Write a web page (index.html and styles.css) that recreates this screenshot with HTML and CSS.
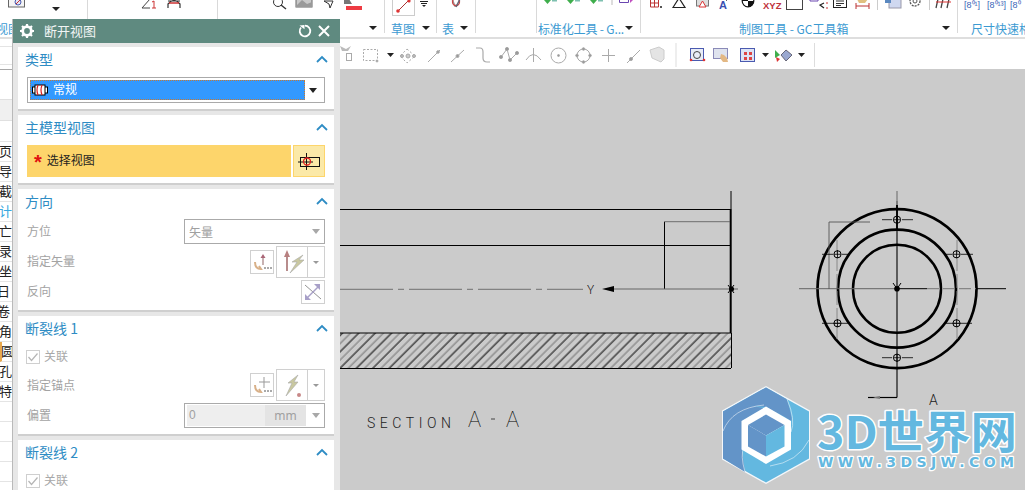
FILE: index.html
```html
<!DOCTYPE html>
<html lang="zh">
<head>
<meta charset="utf-8">
<title>断开视图</title>
<link rel="stylesheet" href="styles.css">
</head>
<body>
<div class="app">
  <header class="ribbon">
    <section class="group g0">
      <svg class="strip" viewBox="0 0 87 24" width="87" height="24">
        <rect x="8.500" y="-4" width="16" height="11" fill="#f4f4f4" stroke="#666"/><circle cx="18" cy="2" r="3" fill="#dfe6f6" stroke="#4a5ab0"/><path d="M16 4l4-4" stroke="#c33"/>
        <path d="M52 7h8l-4 4z" fill="#222"/>
      </svg>
      <div class="label lab-view">视图</div>
    </section>
    <section class="group g1">
      <svg class="strip" viewBox="88 0 129 24" width="129" height="24">
        <path d="M150 -1L142 8H150" fill="none" stroke="#444"/><path d="M152 8h4M154 8V1l-2 1" fill="none" stroke="#c33"/>
        <path d="M168 8V4Q174 -3 180 4V8M168 1h12" fill="none" stroke="#333" stroke-width="1.200"/><path d="M169 3h10" stroke="#c33" stroke-width="1.500"/>
      </svg>
    </section>
    <section class="group g2">
      <svg class="strip" viewBox="218 0 166 24" width="166" height="24">
        <circle cx="278" cy="2" r="4.500" fill="none" stroke="#333"/><path d="M281 5l5 4" stroke="#333" stroke-width="1.400"/>
        <rect x="296" y="-4" width="16" height="11" fill="#c9c9c9" stroke="#666"/><path d="M296 6l6-6 5 4 5-2v5h-16z" fill="#9a9a9a"/>
        <path d="M324 1h9l-3 7-1-4z" fill="none" stroke="#333"/>
        <path d="M344 -1h5l3 5h-8z" fill="#777"/><rect x="346" y="6" width="16" height="4" fill="#ee3b43"/>
      </svg>
      <i class="caret caret-a"></i>
    </section>
    <section class="group g3">
      <svg class="strip" viewBox="385 0 51 24" width="51" height="24">
        <rect x="392.500" y="-3" width="22" height="18.500" fill="#fff" stroke="#ccc"/>
        <path d="M398 11L409 0" stroke="#a33" stroke-width="1"/><circle cx="398" cy="11" r="1.800" fill="#d33"/><circle cx="409" cy="1" r="1.600" fill="#d33"/>
        <path d="M420 1.500h8M421 3.500h6" stroke="#222"/><path d="M422 5h4l-2 2z" fill="#222"/>
      </svg>
      <div class="label lab-sketch">草图</div>
      <i class="caret caret-b"></i>
    </section>
    <section class="group g4">
      <svg class="strip" viewBox="437 0 38 24" width="38" height="24">
        <path d="M452 -1l3 7 3-1" fill="none" stroke="#999" stroke-width="1.500"/><circle cx="456" cy="2" r="3.500" fill="none" stroke="#c44" stroke-width="1.300"/><path d="M460 -1l-4 8" stroke="#667" stroke-width="1.500"/>
      </svg>
      <div class="label lab-table">表</div>
      <i class="caret caret-c"></i>
    </section>
    <section class="group g5"></section>
    <section class="group g6">
      <svg class="strip" viewBox="537 0 103 24" width="103" height="24">
        <path d="M544 0h7l-3.500 4zM567 0h7l-3.500 4zM590 0h7l-3.500 4z" fill="#3fae4c"/>
        <path d="M552 0h5v1.500h-5zM575 0h5v1.500h-5zM598 0h5v1.500h-5z" fill="#7ec0b0"/>
        <path d="M612 -1v6" stroke="#bbb"/>
        <path d="M619.500 -1v3.500h9V-1" fill="none" stroke="#6a46b0"/><path d="M630 0h3l-3 3z" fill="#c050c0"/>
      </svg>
      <div class="label lab-std">标准化工具 - G...</div>
      <i class="caret caret-d"></i>
    </section>
    <section class="group g7">
      <svg class="strip" viewBox="641 0 316 24" width="316" height="24">
        <path d="M650.500 -1v8h8M650.500 3h8M654.500 -1v8M658.500 -1v8" fill="none" stroke="#b33"/><path d="M660 6l2 2m0-2l-2 2" stroke="#555"/>
        <path d="M673 7.500L679 -2l6 9.500z" fill="none" stroke="#222" stroke-width="1.200"/>
        <rect x="696.500" y="-3" width="12" height="9" fill="#ddd" stroke="#777"/><path d="M702.500 1l3.500 6h-7z" fill="#fff" stroke="#d33"/>
        <text class="ic-a" x="719" y="9">A</text><path d="M726 1l3-3" stroke="#666"/>
        <circle cx="748" cy="1" r="5.800" fill="#fff" stroke="#111" stroke-width="1.200"/><path d="M748 1v6a6 6 0 0 0 6-6zM748 1v-6a6 6 0 0 0-6 6z" fill="#111"/>
        <text class="ic-xyz" x="763" y="9">XYZ</text>
        <rect x="786.500" y="-2" width="16" height="11.500" fill="#fff" stroke="#444"/>
        <path d="M810 -1h8v2h-8z" fill="#fff" stroke="#6a46b0"/><path d="M824 3l-4 2 4 3" fill="none" stroke="#222" stroke-width="1.200"/><path d="M826 3h2M826 8h2" stroke="#c33"/>
        <rect x="833.500" y="-2" width="13" height="9.500" fill="#fff" stroke="#222"/><path d="M836 1h8M836 3.500h8M836 5.500h5" stroke="#333"/>
        <path d="M857 -1h11l-3 4h-6z" fill="#e0c080"/><path d="M856 3v6M869 3v6M856 6h13" stroke="#b33"/>
        <path d="M877.500 -1v11" stroke="#ccc"/>
        <rect x="889" y="-2" width="12" height="10" fill="#cfd8f0" stroke="#99a"/><rect x="885" y="-2" width="6" height="5" fill="#5a88c0"/>
        <circle cx="915" cy="1" r="5" fill="#fff" stroke="#555" stroke-width="1.300" stroke-dasharray="2 1"/><circle cx="915" cy="1" r="2" fill="none" stroke="#555"/>
        <path d="M929.500 -1v11" stroke="#ccc"/>
        <path d="M936 8l2-9M941 8l2-9M947 8l2-9" stroke="#444" stroke-width="1.300"/><path d="M936 2h15" stroke="#d33"/>
      </svg>
      <div class="label lab-gc">制图工具 - GC工具箱</div>
      <i class="caret caret-e"></i>
    </section>
    <section class="group g8">
      <svg class="strip" viewBox="958 0 67 24" width="67" height="24">
        <text class="ic-dim" x="964" y="8">[8⁰¹]</text><text class="ic-dim" x="987" y="8">[8⁰¹³]</text><text class="ic-dim" x="1010" y="8">[8⁰</text>
      </svg>
      <div class="label lab-size">尺寸快速格</div>
    </section>
  </header>

  <nav class="toolbar">
    <div class="tool-left"></div>
    <svg viewBox="340 39 480 30" width="480" height="30">
      <g fill="none" stroke="#aaa">
        <path d="M340 46l6 3 5-3-3 5h-6z" fill="#bbb" stroke="none"/><rect x="346.500" y="53.500" width="5" height="7"/>
        <rect x="363.500" y="49.500" width="14" height="11" stroke-dasharray="2 1.500"/><circle cx="377" cy="61" r="1" fill="#aaa"/>
        <path d="M407 49l8 7-8 7-7-7z" stroke-dasharray="2 2"/><circle cx="408" cy="56" r="2" fill="#ccc"/><circle cx="402" cy="56" r="1.500" fill="#bbb"/><circle cx="414" cy="56" r="1.500" fill="#bbb"/>
        <path d="M428 62l12-12"/><circle cx="438" cy="52" r="1.300" fill="#999"/>
        <path d="M451 62l13-12"/><circle cx="457.500" cy="56" r="1.500" fill="#999"/>
        <path d="M476 48h4q3 0 3 4v6q0 4 4 4h3" stroke-width="1.200"/>
        <path d="M501 57l6-8 3 11 7-7"/><circle cx="501" cy="57" r="1.600" fill="#999"/><circle cx="507" cy="49" r="1.600" fill="#999"/><circle cx="510" cy="60" r="1.600" fill="#999"/><circle cx="517" cy="53" r="1.600" fill="#999"/>
        <path d="M526 60q7-11 15 0M533.500 48v14"/>
        <circle cx="558.500" cy="55.500" r="7.500"/><circle cx="558.500" cy="55.500" r="1" fill="#999"/>
        <circle cx="583.500" cy="55.500" r="6.500"/><circle cx="583.500" cy="49" r="1.300" fill="#999"/><circle cx="590" cy="55.500" r="1.300" fill="#999"/><circle cx="577" cy="55.500" r="1.300" fill="#999"/><circle cx="583.500" cy="62" r="1.300" fill="#999"/>
        <path d="M602 55.500h13M608.500 49v13"/>
        <path d="M627 63l13-13"/><circle cx="631" cy="59" r="1.500" fill="#999"/>
        <path d="M650 50l9-3 5 3v9l-3 3-9-4z" fill="#e4e4e4" stroke="#ccc"/>
      </g>
      <path d="M387 53h7l-3.500 4z" fill="#222"/>
      <path d="M676 43v24" stroke="#ddd"/>
      <rect x="690.500" y="48.500" width="13" height="12" fill="#e8ecf6" stroke="#4a5ab0"/><circle cx="697" cy="55" r="3.500" fill="none" stroke="#444"/><circle cx="691" cy="60" r="1.300" fill="#d33"/><circle cx="704" cy="60" r="1.300" fill="#d33"/>
      <rect x="713.500" y="48.500" width="14" height="10" fill="#dfe3ee" stroke="#8a8ab8"/><path d="M721 54l3 1 3 3 1 4h-5l-3-4z" fill="#e3b884"/>
      <rect x="740.500" y="48.500" width="14" height="13" fill="#dde3f5" stroke="#4a5ab0"/><rect x="744" y="52" width="3" height="3" fill="#d44"/><rect x="749" y="52" width="3" height="3" fill="#d44"/><rect x="744" y="57" width="3" height="3" fill="#d44"/><rect x="749" y="57" width="3" height="3" fill="#d44"/>
      <path d="M762 53h7l-3.500 4z" fill="#222"/>
      <path d="M775 50l5 5-5 3z" fill="#3fae4c"/><path d="M776 57l4 2-3 3z" fill="#d33"/><path d="M786 50l6 5-6 6-5-6z" fill="#9aa8d0" stroke="#667"/>
      <path d="M798 53h7l-3.500 4z" fill="#222"/>
      <path d="M814.500 43v24" stroke="#ddd"/>
    </svg>
  </nav>

  <div class="workspace">
    <ul class="tree">
      <li class="tree-head"><div class="head-a"></div><div class="head-b"></div><div class="head-c"></div></li>
      <li class="tree-row"><span>页</span></li>
      <li class="tree-row"><span>导入</span></li>
      <li class="tree-row"><span>截面</span></li>
      <li class="tree-row row-blue"><span>计</span></li>
      <li class="tree-row"><span>亡</span></li>
      <li class="tree-row"><span>录</span></li>
      <li class="tree-row"><span>坐</span></li>
      <li class="tree-row"><span class="shift">日 (</span></li>
      <li class="tree-row"><span class="shift">卷 (2</span></li>
      <li class="tree-row"><span>角</span></li>
      <li class="tree-row row-mark"><span>圆</span></li>
      <li class="tree-row"><span>孔</span></li>
      <li class="tree-row"><span>特</span></li>
      <li class="tree-row"></li>
      <li class="tree-row"></li>
      <li class="tree-row"></li>
      <li class="tree-row"></li>
    </ul>
    <main class="canvas">
      <svg class="drawing" viewBox="0 69 1025 421" width="1025" height="421">
        <defs>
          <pattern id="hatch" width="11.600" height="11.600" patternUnits="userSpaceOnUse" patternTransform="rotate(45)">
            <path d="M2 0v11.600" stroke="#000" stroke-width="1"/>
            <path d="M7.800 0v11.600" stroke="#666" stroke-width="0.900"/>
          </pattern>
        </defs>
        <rect x="340" y="333" width="391" height="35.500" fill="url(#hatch)"/>
        <g fill="none" stroke="#000">
          <path d="M340 209.500H731M340 245.500H731" stroke-width="1.200"/>
          <path d="M340 333H731M340 368.500H731" stroke-width="1"/>
          <path d="M731 191V209" stroke-width="1"/>
          <path d="M730.700 209V333" stroke-width="2"/>
          <path d="M731.500 333V368" stroke-width="1"/>
          <path d="M664.500 221.700V289" stroke-width="1"/>
          <path d="M664.500 221.700H730" stroke="#555" stroke-width="0.800"/>
          <path d="M340 289.300H583" stroke="#666" stroke-dasharray="53 5 6 5" stroke-width="0.900"/>
          <path d="M612 289H738" stroke="#666" stroke-width="1.200"/>
          <path d="M728 285l6 8M734 285l-6 8" stroke-width="1"/>
        </g>
        <path d="M602 289l12-3v6z" fill="#000"/>
        <circle cx="731.500" cy="289" r="2.500" fill="#000"/>
        <text class="cad-y" x="587" y="294">Y</text>
        <text class="cad-sec" x="367" y="428" textLength="84">SECTION</text>
        <text class="cad-big" x="468" y="427">A</text>
        <path d="M491 419h4" stroke="#444"/>
        <text class="cad-big" x="506" y="427">A</text>

        <g fill="none" stroke="#000">
          <circle cx="897" cy="288.700" r="79.500" stroke-width="2.700"/>
          <circle cx="897" cy="288.700" r="59" stroke-width="2.700"/>
          <circle cx="897" cy="288.700" r="44" stroke-width="2.500"/>
          <path d="M897 201V397.500" stroke-width="1.100"/>
          <path d="M897 191V205" stroke="#888" stroke-width="1.500"/>
          <path d="M897 230V205" stroke-width="1.800"/>
          <path d="M799 288.700H897" stroke="#666" stroke-width="1"/>
          <path d="M897 288.700H927M976 288.700H1006" stroke-width="1"/>
          <path d="M927 288.700H976" stroke="#777" stroke-width="1" stroke-dasharray="12 4"/>
          <path d="M829 289V222H870" stroke="#555" stroke-width="0.900"/>
          <path d="M837 240V340M957 240V340" stroke="#888" stroke-dasharray="14 3" stroke-width="1"/>
          <path d="M868 397.500H897" stroke-width="1.200"/>
          <circle cx="897" cy="219.700" r="3.600"/>
          <circle cx="956.500" cy="254.300" r="3.600"/>
          <circle cx="956.500" cy="323.300" r="3.600"/>
          <circle cx="897" cy="357.700" r="3.600"/>
          <circle cx="837.500" cy="323.300" r="3.600"/>
          <circle cx="837.500" cy="254.300" r="3.600"/>
          <g stroke-width="0.800">
            <path d="M882 219.700H892M902 219.700H913M822 254.300H833M842 254.300H850M944 254.300H952M961 254.300H973M822 323.300H850M944 323.300H972M882 357.700H892M902 357.700H913"/>
            <path d="M897 216V224M953 254.300H960M956.500 250V258M956.500 319V327M897 354V362M837.500 250V258M837.500 319V327M833.900 323.300H841M833.900 254.300H841M893.400 357.700H900.600M893.400 219.700H900.600M953 323.300H960"/>
          </g>
        </g>
        <path d="M893 283l4 5.700 4-5.700" fill="none" stroke="#000"/>
        <circle cx="897" cy="288.700" r="2.800" fill="#000"/>
        <path d="M873 397.500l7-1.500v3z" fill="#777"/>
        <text class="cad-a" x="929" y="405">A</text>

        <path d="M766 386L810 410.500V459.500L766 484L722 459.500V410.500Z" fill="#f4f7fa"/>
        <path d="M766 387.500L809 411.500V458.500L766 482.500L723 458.500V411.500Z" fill="#63b8e0"/>
        <path d="M766 387.500L787 399.500Q793 420 791 421L766 407L742 421V451L745 472L723 458.500V411.500Z" fill="#6394c8"/>
        <path d="M741.500 405Q770 406 791 421L766 407Z" fill="#63b8e0"/>
        <path d="M766 406.500L791 421V449.500L766 464L741.500 449.500V421Z" fill="#fff"/>
        <path d="M766 414.500L784.500 425L766 435.500L748 425Z" fill="#6394c8"/>
        <path d="M748 425L766 435.500V456.500L748 446.500Z" fill="#6394c8"/>
        <path d="M784.500 425V446.500L766 456.500V435.500Z" fill="#63b8e0"/>
        <g fill="none" stroke="#fff" stroke-width="0.700" opacity=".75">
          <path d="M723 431Q732 408 764 405"/><path d="M787 399Q796 420 791 432"/>
          <path d="M745 472Q740 455 744 447"/><path d="M809 440Q798 462 770 466"/>
        </g>
        <text class="logo-main" x="817" y="449" textLength="200" lengthAdjust="spacingAndGlyphs">3D世界网</text>
        <text class="logo-sub" x="818" y="467" textLength="196" lengthAdjust="spacing">WWW.3DSJW.COM</text>
      </svg>
    </main>
  </div>

  <aside class="dialog">
    <div class="dlg-title">
      <svg class="gear" viewBox="0 0 16 16" width="16" height="16">
        <circle cx="8" cy="8" r="4.300" fill="none" stroke="#fff" stroke-width="2.800"/>
        <path d="M8 1v2.500M8 12.500V15M1 8h2.500M12.500 8H15M3 3l1.800 1.800M11.200 11.200L13 13M13 3l-1.800 1.800M4.800 11.200L3 13" stroke="#fff" stroke-width="2.200"/>
      </svg>
      <span class="dlg-name">断开视图</span>
      <svg class="reset" viewBox="0 0 14 14" width="14" height="14">
        <path d="M3 3.500A5.300 5.300 0 1 0 7 1.700" fill="none" stroke="#fff" stroke-width="1.800"/><path d="M1.500 1.500L6.500 1V5.200z" fill="#fff"/>
      </svg>
      <svg class="close" viewBox="0 0 14 14" width="14" height="14">
        <path d="M2 2L12 12M12 2L2 12" stroke="#fff" stroke-width="2"/>
      </svg>
    </div>
    <div class="dlg-body">
      <section class="panel">
        <header class="panel-head h30"><h2>类型</h2><svg class="chev" viewBox="0 0 12 8" width="12" height="8"><path d="M1 7L6 2l5 5" fill="none" stroke="#2e8cc4" stroke-width="1.800"/></svg></header>
        <div class="type-select">
          <div class="type-value">
            <svg viewBox="0 0 16 12" width="16" height="12"><rect x="0.500" y="3" width="3" height="6" fill="#fff" stroke="#000"/><rect x="12.500" y="3" width="3" height="6" fill="#fff" stroke="#000"/><rect x="3" y="1" width="10" height="10" fill="#fff" stroke="#000"/><path d="M6 1Q4 6 6 11M10 1Q8 6 10 11" fill="none" stroke="#d22" stroke-width="1.200"/></svg>
            <span>常规</span>
          </div>
          <i class="tri tri-dark"></i>
        </div>
      </section>

      <section class="panel">
        <header class="panel-head h30"><h2>主模型视图</h2><svg class="chev" viewBox="0 0 12 8" width="12" height="8"><path d="M1 7L6 2l5 5" fill="none" stroke="#2e8cc4" stroke-width="1.800"/></svg></header>
        <div class="pick-row">
          <div class="pick-main"><span class="star">*</span><span class="pick-text">选择视图</span></div>
          <div class="pick-btn">
            <svg viewBox="0 0 24 20" width="24" height="20"><rect x="3.500" y="6.500" width="19" height="9" fill="none" stroke="#111"/><path d="M1 11h15M9.500 2v17" stroke="#111"/><circle cx="10" cy="10.500" r="3.500" fill="none" stroke="#e02020" stroke-width="1.300"/></svg>
          </div>
        </div>
      </section>

      <section class="panel">
        <header class="panel-head h30"><h2>方向</h2><svg class="chev" viewBox="0 0 12 8" width="12" height="8"><path d="M1 7L6 2l5 5" fill="none" stroke="#2e8cc4" stroke-width="1.800"/></svg></header>
        <div class="field-stack">
          <div class="field"><label>方位</label>
            <div class="select"><span>矢量</span><i class="tri tri-grey"></i></div>
          </div>
          <div class="field tall"><label>指定矢量</label>
            <div class="tools">
              <div class="tbtn">
                <svg viewBox="0 0 24 24" width="24" height="24"><path d="M13 15V6" stroke="#a88" stroke-width="1.300"/><path d="M13 4l-2.500 4h5z" fill="#a67"/><path d="M5 12q0 7 6 7l-2-3" fill="none" stroke="#d8b088" stroke-width="2"/><path d="M14 17h2v2h-2zM17 17h2v2h-2zM20 17h2v2h-2z" fill="#aaa"/></svg>
              </div>
              <div class="split">
                <div class="split-main">
                  <svg viewBox="0 0 30 30" width="30" height="30"><path d="M10 24V8" stroke="#b08080" stroke-width="1.800"/><path d="M10 3l-3 7h6z" fill="#b88080"/><path d="M26 8L15 15l5 0-7 11 14-13-5 0z" fill="#c9c8a0" stroke="#aaa" stroke-width="0.600"/></svg>
                </div>
                <div class="split-arrow"><i class="tri tri-small"></i></div>
              </div>
            </div>
          </div>
          <div class="field short"><label>反向</label>
            <div class="tbtn">
              <svg viewBox="0 0 24 24" width="24" height="24"><path d="M4 5L20 19" stroke="#777" stroke-width="0.800"/><path d="M6 18L18 6" stroke="#a8a0c8" stroke-width="1.500"/><path d="M19 4v6l-6-6zM4 20v-6l6 6z" fill="#a8a0c8"/></svg>
            </div>
          </div>
        </div>
      </section>

      <section class="panel">
        <header class="panel-head h29"><h2>断裂线 1</h2><svg class="chev" viewBox="0 0 12 8" width="12" height="8"><path d="M1 7L6 2l5 5" fill="none" stroke="#2e8cc4" stroke-width="1.800"/></svg></header>
        <div class="check-row"><i class="check"><svg viewBox="0 0 12 12" width="12" height="12"><path d="M1.500 6l3 3.500 6-7" fill="none" stroke="#b5b5b5" stroke-width="1.200"/></svg></i><span>关联</span></div>
        <div class="field tall"><label class="label-anchor">指定锚点</label>
          <div class="tools">
            <div class="tbtn">
              <svg viewBox="0 0 24 24" width="24" height="24"><path d="M14 4v11M9 9h11" stroke="#999"/><path d="M5 12q0 7 6 7l-2-3" fill="none" stroke="#d8b088" stroke-width="2"/><path d="M14 17h2v2h-2zM17 17h2v2h-2zM20 17h2v2h-2z" fill="#aaa"/></svg>
            </div>
            <div class="split">
              <div class="split-main">
                <svg viewBox="0 0 30 30" width="30" height="30"><path d="M21 5L11 13l4 0-6 13 12-14-4 0z" fill="#c9c8a0" stroke="#aaa" stroke-width="0.600"/><circle cx="22" cy="25" r="2" fill="#c88888"/></svg>
              </div>
              <div class="split-arrow"><i class="tri tri-small"></i></div>
            </div>
          </div>
        </div>
        <div class="field offset-row"><label>偏置</label>
          <div class="select input">
            <span class="in-val">0</span><span class="in-unit">mm</span><i class="tri tri-grey"></i>
          </div>
        </div>
      </section>

      <section class="panel">
        <header class="panel-head h29"><h2>断裂线 2</h2><svg class="chev" viewBox="0 0 12 8" width="12" height="8"><path d="M1 7L6 2l5 5" fill="none" stroke="#2e8cc4" stroke-width="1.800"/></svg></header>
        <div class="check-row"><i class="check"><svg viewBox="0 0 12 12" width="12" height="12"><path d="M1.500 6l3 3.500 6-7" fill="none" stroke="#b5b5b5" stroke-width="1.200"/></svg></i><span>关联</span></div>
      </section>
    </div>
  </aside>
</div>
</body>
</html>
```

FILE: styles.css
```css
* { box-sizing: border-box; }
html, body { margin: 0; padding: 0; }
body {
  width: 1025px;
  height: 490px;
  overflow: hidden;
  background: #fff;
  font-family: "Noto Sans CJK SC", "Liberation Sans", sans-serif;
}
svg { display: block; }

.app {
  position: relative;
  width: 1025px;
  height: 490px;
  overflow: hidden;
  display: flex;
  flex-direction: column;
}

/* ribbon */
.ribbon {
  display: flex;
  height: 39px;
  flex: none;
  background: #fff;
  border-bottom: 2px solid #dedede;
}
.group {
  position: relative;
  height: 33px;
  border-right: 1px solid #d9d9d9;
  flex: none;
}
.g0 { width: 88px; }
.g1 { width: 130px; }
.g2 { width: 167px; }
.g3 { width: 52px; }
.g4 { width: 39px; }
.g5 { width: 61px; }
.g6 { width: 104px; }
.g7 { width: 317px; }
.g8 { width: 67px; border-right: 0; }
.strip { height: 24px; overflow: hidden; }

.label {
  font-size: 12px;
  line-height: 14px;
  color: #3b9ad2;
  white-space: nowrap;
  margin-top: -2px;
}
.lab-view { margin-left: -4px; }
.lab-sketch { margin-left: 6px; }
.lab-table { margin-left: 5px; }
.lab-std { margin-left: 1px; width: 90px; font-size: 12px; letter-spacing: -0.150px; }
.lab-gc { margin-left: 98px; letter-spacing: 0; }
.lab-size { margin-left: 13px; }

.caret {
  position: absolute;
  top: 26px;
  width: 0;
  height: 0;
  border-left: 4px solid transparent;
  border-right: 4px solid transparent;
  border-top: 4px solid #222;
}
.caret-a { left: 151px; }
.caret-b { left: 37px; }
.caret-c { left: 23px; }
.caret-d { left: 88px; }
.caret-e { left: 301px; }

.ic-a { font: 700 11px "Liberation Sans", sans-serif; fill: #3a50b0; }
.ic-xyz { font: 700 9.500px "Liberation Sans", sans-serif; fill: #c0333c; }
.ic-dim { font: 9px "Liberation Sans", sans-serif; fill: #3b66b8; }

/* toolbar */
.toolbar {
  height: 30px;
  flex: none;
  display: flex;
  background: #fff;
}
.tool-left {
  width: 340px;
  height: 19px;
  flex: none;
  margin-top: 7px;
  border-top: 1px solid #e4e4e4;
  border-bottom: 1px solid #e4e4e4;
}

/* workspace */
.workspace {
  flex: 1;
  display: flex;
  min-height: 0;
}
.tree {
  width: 340px;
  flex: none;
  margin: 0;
  padding: 0;
  list-style: none;
  background: #fff;
}
.tree-head { height: 73px; border-top: 1px solid #a8a8a8; }
.head-a { height: 30px; border-bottom: 1px solid #e0e0e0; }
.head-b { height: 21px; background: #f0f0f0; border-bottom: 1px solid #e0e0e0; }
.head-c { height: 21px; border-bottom: 1px solid #e4e4e4; }
.tree-row {
  height: 20px;
  border-bottom: 1px solid #e4e4e4;
  font-size: 13px;
  line-height: 17px;
  color: #222;
  overflow: hidden;
  white-space: nowrap;
}
.tree-row span { display: block; margin-left: -1px; }
.tree-row .shift { margin-left: -3px; }
.row-blue { color: #39a8e0; }
.row-mark { border-left: 2px solid #e8a84c; }
.canvas {
  flex: 1;
  position: relative;
  background: #cbcbcb;
  min-width: 0;
}
.drawing {
  position: absolute;
  right: 0;
  top: 0;
}
.cad-y { font: 300 12px Roboto, sans-serif; fill: #111; }
.cad-sec { font: 300 14px Roboto, sans-serif; fill: #222; }
.cad-big { font: 100 22px Roboto, sans-serif; fill: #000; }
.cad-a { font: 300 14px Roboto, sans-serif; fill: #222; }
.logo-main {
  font: 700 45px "Noto Sans CJK SC", sans-serif;
  fill: #63b8e0;
  stroke: #fff;
  stroke-width: 3px;
  paint-order: stroke;
  stroke-linejoin: round;
}
.logo-sub {
  font: 700 14px "DejaVu Sans", sans-serif;
  fill: #63b8e0;
  stroke: #fff;
  stroke-width: 2.500px;
  paint-order: stroke;
  stroke-linejoin: round;
}

/* dialog */
.dialog {
  position: absolute;
  left: 12px;
  top: 19px;
  width: 328px;
  height: 471px;
  overflow: hidden;
  background: #e7e7e7;
  border-left: 1px solid #b9b9b9;
}
.dlg-title {
  height: 24px;
  display: flex;
  align-items: center;
  background: #5f8a80;
  color: #fff;
  padding-left: 6px;
  padding-right: 9px;
}
.gear { flex: none; margin-right: 9px; }
.dlg-name { font-size: 13px; line-height: 24px; flex: 1; color: #f1f5f4; }
.reset { margin-right: 5px; }
.dlg-body {
  display: flex;
  flex-direction: column;
  gap: 4px;
  padding: 4px 6px 0 5px;
}
.panel {
  background: #fff;
  border-bottom: 2px solid #cfcfcf;
  padding: 0 9px 6px 9px;
  flex: none;
}
.panel:last-child { border-bottom: 0; }
.panel-head {
  display: flex;
  align-items: center;
  justify-content: space-between;
  margin-right: -3px;
}
.h30 { height: 30px; padding-bottom: 6px; }
.h29 { height: 29px; padding-bottom: 5px; }
.panel-head h2 {
  margin: 0 0 0 -2px;
  font-size: 14px;
  font-weight: 400;
  color: #2e8cc4;
  line-height: 20px;
}

.type-select {
  height: 26px;
  border: 1px solid #aaa;
  display: flex;
  align-items: center;
  padding: 0 7px 0 2px;
  justify-content: space-between;
}
.type-value {
  width: 275px;
  height: 20px;
  background: #3399ff;
  outline: 1px dotted #c87830;
  outline-offset: -1px;
  display: flex;
  align-items: center;
  gap: 5px;
  padding-left: 2px;
  color: #fff;
  font-size: 12px;
}
.type-value span { padding-bottom: 3px; }
.tri {
  display: block;
  width: 0;
  height: 0;
  border-left: 4px solid transparent;
  border-right: 4px solid transparent;
  border-top: 5px solid #222;
  flex: none;
}
.tri-grey { border-top-color: #a8a8a8; }
.tri-small { border-left-width: 3px; border-right-width: 3px; border-top: 3px solid #999; }

.pick-row { display: flex; height: 32px; gap: 2px; }
.pick-main {
  flex: 1;
  background: #fdd56b;
  display: flex;
  align-items: center;
  padding-left: 7px;
  font-size: 12px;
  color: #1f1f1f;
  gap: 5px;
}
.pick-text { padding-bottom: 3px; }
.star {
  color: #e01010;
  font: 700 20px/17px "Liberation Sans", sans-serif;
  height: 14px;
}
.pick-btn {
  width: 32px;
  background: #fbe9a8;
  border: 1px solid #fdd56b;
  display: flex;
  align-items: center;
  justify-content: center;
}

.field-stack { display: flex; flex-direction: column; gap: 2px; }
.field {
  display: flex;
  align-items: center;
  justify-content: space-between;
  height: 25px;
}
.field.tall { height: 32px; }
.field.short { height: 24px; }
.field label { font-size: 12px; color: #a3a3a3; padding-bottom: 3px; }
.field .label-anchor { padding-bottom: 1px; }
.offset-row { margin-top: 2px; }
.select {
  width: 141px;
  height: 25px;
  border: 1px solid #aaa;
  display: flex;
  align-items: center;
  justify-content: space-between;
  padding: 0 4px 0 4px;
  font-size: 12px;
  color: #a0a0a0;
}
.input { padding: 0 4px 0 2px; justify-content: flex-start; }
.in-val {
  width: 78px;
  height: 21px;
  background: #eeeeee;
  line-height: 21px;
  padding-left: 2px;
  font-family: "Liberation Sans", sans-serif;
}
.in-unit {
  width: 41px;
  height: 21px;
  background: #e4e4e4;
  line-height: 21px;
  text-align: center;
  margin-right: 6px;
  font-family: "Noto Sans", sans-serif;
}
.tools { display: flex; align-items: center; gap: 2px; }
.tbtn {
  width: 24px;
  height: 24px;
  border: 1px solid #d0d0d0;
  display: flex;
  align-items: center;
  justify-content: center;
}
.tbtn svg { flex: none; }
.split {
  display: flex;
  width: 49px;
  height: 32px;
  border: 1px solid #d0d0d0;
}
.split-main {
  width: 31px;
  border-right: 1px solid #d0d0d0;
  display: flex;
  align-items: center;
  justify-content: center;
}
.split-arrow {
  flex: 1;
  display: flex;
  align-items: center;
  justify-content: center;
}
.check-row {
  height: 24px;
  display: flex;
  align-items: center;
  gap: 5px;
  font-size: 12px;
  color: #a8a8a8;
}
.check-row span { padding-bottom: 3px; }
.check {
  width: 12px;
  height: 12px;
  outline: 1px solid #cfcfcf;
  display: block;
  flex: none;
}
```
